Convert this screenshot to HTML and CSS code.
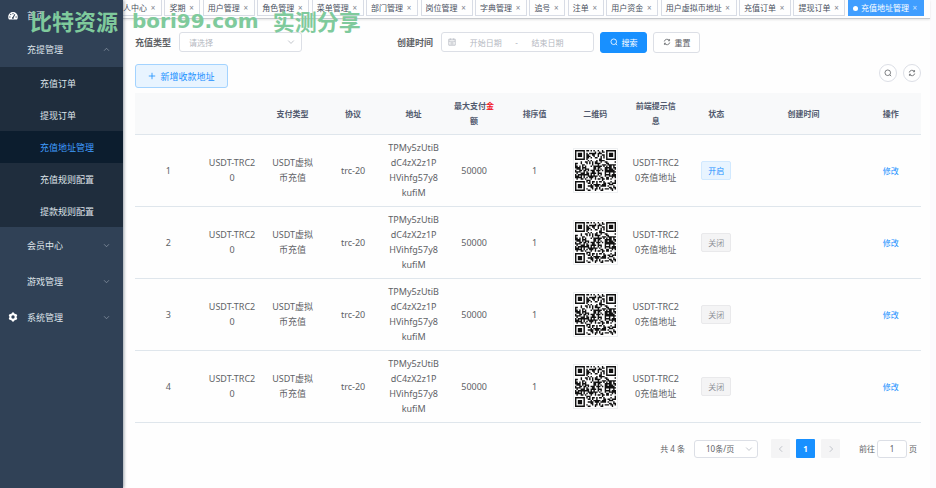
FILE: index.html
```html
<!DOCTYPE html>
<html lang="zh-CN">
<head>
  <meta charset="UTF-8">
  <meta name="viewport" content="width=device-width, initial-scale=1.0">
  <title>充值地址管理</title>
  <link rel="stylesheet" href="styles.css">
</head>
<body>
  <svg class="sprite" aria-hidden="true">
    <symbol id="i-down" viewBox="0 0 10 10"><path d="M1.5 3.2 5 6.8l3.5-3.6"/></symbol>
    <symbol id="i-up" viewBox="0 0 10 10"><path d="M1.5 6.8 5 3.2l3.5 3.6"/></symbol>
    <symbol id="i-left" viewBox="0 0 10 10"><path d="M6.5 1.5 3 5l3.5 3.5"/></symbol>
    <symbol id="i-right" viewBox="0 0 10 10"><path d="M3.5 1.5 7 5 3.5 8.5"/></symbol>
    <symbol id="i-search" viewBox="0 0 10 10"><circle cx="4.7" cy="4.7" r="3.5"/><path d="M7.2 7.2 9 9"/></symbol>
    <symbol id="i-refresh" viewBox="0 0 10 10"><path d="M1.6 4.4A3.5 3.5 0 0 1 8 3.2M8.4 5.6A3.5 3.5 0 0 1 2 6.8M8.2 1.4v2H6.2M1.8 8.6v-2h2"/></symbol>
    <symbol id="i-plus" viewBox="0 0 10 10"><path d="M5 1v8M1 5h8"/></symbol>
    <symbol id="i-date" viewBox="0 0 10 10"><path d="M1 1.5h8v7.5H1zM1 4h8M3 .6v1.6M7 .6v1.6M3 6h4M3 7.5h4"/></symbol>
  </svg>

  <div class="app">
    <aside class="sidebar">
      <a class="menu-item home" href="#">
        <svg class="menu-icon" viewBox="0 0 10 10"><path fill="currentColor" fill-rule="evenodd" d="M5 1a4.8 4.8 0 0 0-4.8 4.9c0 1 .3 1.9.8 2.6h8c.5-.7.8-1.6.8-2.6A4.8 4.8 0 0 0 5 1zM4.5 2h1v1.3h-1zM2 3.3l.7-.6.8 1-.7.6zM1.2 5.5h1.3v1H1.2zM7.500 5.5h1.3v1H7.5zM6.5 3l.8.5-1.6 3a.9.9 0 1 1-.9-.4z"/></svg>
        <span>首页</span>
      </a>
      <a class="menu-item" href="#"><span>充提管理</span><svg class="arrow"><use href="#i-up"/></svg></a>
      <nav class="submenu">
        <a href="#">充值订单</a>
        <a href="#">提现订单</a>
        <a href="#" class="active">充值地址管理</a>
        <a href="#">充值规则配置</a>
        <a href="#">提款规则配置</a>
      </nav>
      <a class="menu-item" href="#"><span>会员中心</span><svg class="arrow"><use href="#i-down"/></svg></a>
      <a class="menu-item" href="#"><span>游戏管理</span><svg class="arrow"><use href="#i-down"/></svg></a>
      <a class="menu-item" href="#">
        <svg class="menu-icon" viewBox="0 0 10 10"><circle class="gear-ring" cx="5" cy="5" r="2.7"/><path class="gear-teeth" d="M5 .6v1.6M5 7.8v1.6M1.2 2.8l1.4.8M7.4 6.4l1.4.8M1.2 7.2l1.4-.8M7.4 3.6l1.4-.8"/></svg>
        <span>系统管理</span><svg class="arrow"><use href="#i-down"/></svg>
      </a>
    </aside>

    <main class="main">
      <nav class="tabs">
        <a href="#">人中心<i>×</i></a>
        <a href="#">奖期<i>×</i></a>
        <a href="#">用户管理<i>×</i></a>
        <a href="#">角色管理<i>×</i></a>
        <a href="#">菜单管理<i>×</i></a>
        <a href="#">部门管理<i>×</i></a>
        <a href="#">岗位管理<i>×</i></a>
        <a href="#">字典管理<i>×</i></a>
        <a href="#">追号<i>×</i></a>
        <a href="#">注单<i>×</i></a>
        <a href="#">用户资金<i>×</i></a>
        <a href="#">用户虚拟币地址<i>×</i></a>
        <a href="#">充值订单<i>×</i></a>
        <a href="#">提现订单<i>×</i></a>
        <a href="#" class="active">充值地址管理<i>×</i></a>
      </nav>

      <div class="content">
        <form class="search-form">
          <label for="type">充值类型</label>
          <div class="select type-select">
            <select id="type"><option>请选择</option></select>
            <svg><use href="#i-down"/></svg>
          </div>
          <label class="date-label" for="start">创建时间</label>
          <div class="date-range">
            <svg><use href="#i-date"/></svg>
            <input id="start" type="text" placeholder="开始日期">
            <span>-</span>
            <input type="text" placeholder="结束日期" aria-label="结束日期">
          </div>
          <button type="button" class="btn primary"><svg><use href="#i-search"/></svg>搜索</button>
          <button type="button" class="btn reset"><svg><use href="#i-refresh"/></svg>重置</button>
        </form>

        <div class="toolbar">
          <button type="button" class="add-btn"><svg><use href="#i-plus"/></svg>新增收款地址</button>
          <div class="tools">
            <button type="button" aria-label="搜索"><svg><use href="#i-search"/></svg></button>
            <button type="button" aria-label="刷新"><svg><use href="#i-refresh"/></svg></button>
          </div>
        </div>

        <table>
          <colgroup>
            <col class="col-index">
            <col span="9" class="col-base">
            <col class="col-time">
            <col class="col-base">
          </colgroup>
          <thead>
            <tr>
              <th></th>
              <th></th>
              <th>支付类型</th>
              <th>协议</th>
              <th>地址</th>
              <th>最大支付<span class="mark">金</span>额</th>
              <th>排序值</th>
              <th>二维码</th>
              <th>前端提示信息</th>
              <th>状态</th>
              <th>创建时间</th>
              <th>操作</th>
            </tr>
          </thead>
          <tbody id="rows"></tbody>
        </table>

        <div class="pagination">
          <span class="total">共 4 条</span>
          <div class="select size-select">
            <select aria-label="每页条数"><option>10条/页</option></select>
            <svg><use href="#i-down"/></svg>
          </div>
          <div class="pager">
            <button type="button" disabled aria-label="上一页"><svg><use href="#i-left"/></svg></button>
            <button type="button" class="current">1</button>
            <button type="button" disabled aria-label="下一页"><svg><use href="#i-right"/></svg></button>
          </div>
          <label for="jump">前往</label>
          <input id="jump" type="text" value="1">
          <span>页</span>
        </div>
      </div>
    </main>
  </div>

  <div class="watermark"><span>比特资源</span><span class="site">bori99.com</span><span>实测分享</span></div>

  <script src="script.js"></script>
</body>
</html>
```

FILE: styles.css
```css
* {
  box-sizing: border-box;
}

body {
  margin: 0;
  font-family: "Noto Sans", "Noto Sans CJK SC", sans-serif;
  font-size: 8px;
  line-height: 15px;
  color: #606266;
  background: #fefefe;
}

a {
  color: inherit;
  text-decoration: none;
}

button, input, select {
  font: inherit;
  color: inherit;
  margin: 0;
  padding: 0;
  border: 1px solid #dcdfe6;
  border-radius: 3px;
  background: #fff;
}

svg {
  width: 8px;
  height: 8px;
  flex: none;
  fill: none;
  stroke: currentColor;
  stroke-width: 1;
}

.sprite {
  display: none;
}

.app {
  display: flex;
  min-height: 100vh;
}

/* sidebar */
.sidebar {
  flex: none;
  width: 123px;
  font-size: 9px;
  color: #dfe4ea;
  background: #304156;
  box-shadow: 1px 0 3px rgba(0, 21, 41, 0.4);
  z-index: 1;
}

.menu-item {
  position: relative;
  display: flex;
  align-items: center;
  height: 36px;
  padding: 0 13px 0 27px;
}

.menu-item.home {
  height: 31px;
}

.menu-icon {
  position: absolute;
  left: 8px;
  width: 10px;
  height: 10px;
  stroke: none;
  color: #fff;
}

.gear-ring {
  stroke: #fff;
  stroke-width: 2;
}

.gear-teeth {
  stroke: #fff;
  stroke-width: 2;
}

.arrow {
  margin-left: auto;
  width: 7px;
  height: 7px;
  color: #909cab;
}

.submenu {
  background: #1f2d3d;
}

.submenu a {
  display: block;
  height: 32px;
  line-height: 34px;
  padding-left: 40px;
}

.submenu .active {
  color: #409eff;
  background: #0c1d2e;
}

/* open pages */
.main {
  flex: 1;
  min-width: 0;
  border-right: 6px solid #fcfafd;
}

.tabs {
  display: flex;
  justify-content: space-between;
  height: 19px;
  padding-right: 6px;
  border-bottom: 1px solid #c8cace;
  box-shadow: 0 1px 2px rgba(0, 0, 0, 0.1);
}

.tabs a {
  flex: none;
  height: 16px;
  padding: 0 4px;
  border: 1px solid #d8dce5;
  border-top: 0;
  white-space: nowrap;
  color: #495060;
}

.tabs a:first-child {
  padding-left: 0;
  border-left: 0;
}

.tabs i {
  display: inline-block;
  width: 10px;
  padding-left: 2px;
  text-align: center;
  font-style: normal;
  opacity: 0.7;
}

.tabs .active {
  color: #fff;
  background: #409eff;
  border-color: #409eff;
}

.tabs .active::before {
  content: "";
  display: inline-block;
  width: 5px;
  height: 5px;
  margin-right: 3px;
  border-radius: 50%;
  background: #fff;
}

.content {
  padding: 13px 9px 0 12px;
}

/* filters */
.search-form {
  display: flex;
  align-items: center;
  height: 20px;
}

.search-form label {
  margin-right: 8px;
  font-size: 9px;
  font-weight: bold;
}

.search-form .date-label {
  margin-left: 95px;
}

.select {
  position: relative;
}

.select select {
  width: 100%;
  height: 100%;
  appearance: none;
}

.select svg {
  position: absolute;
  right: 7px;
  top: 6px;
  color: #b4b8bf;
  pointer-events: none;
}

.type-select {
  width: 123px;
  height: 20px;
}

.type-select select {
  padding-left: 9px;
  color: #b4b8bf;
}

.date-range {
  display: flex;
  align-items: center;
  width: 153px;
  height: 20px;
  padding: 0 16px 0 6px;
  border: 1px solid #dcdfe6;
  border-radius: 3px;
  color: #b4b8bf;
  background: #fff;
}

.date-range input {
  flex: 1;
  min-width: 0;
  border: 0;
  text-align: center;
}

::placeholder {
  color: #b4b8bf;
}

.btn {
  display: flex;
  align-items: center;
  justify-content: center;
  gap: 4px;
  width: 47px;
  height: 21px;
  margin-left: 6px;
}

.btn.primary {
  color: #fff;
  background: #1890ff;
  border-color: #1890ff;
}

.toolbar {
  display: flex;
  align-items: center;
  justify-content: space-between;
  margin: 12px 0 5px;
}

.add-btn {
  display: flex;
  align-items: center;
  justify-content: center;
  gap: 4px;
  width: 93px;
  height: 24px;
  font-size: 9px;
  color: #1890ff;
  background: #e8f4ff;
  border-color: #a3d3ff;
}

.tools {
  display: flex;
  gap: 6px;
  margin-bottom: 6px;
}

.tools button {
  display: flex;
  align-items: center;
  justify-content: center;
  width: 18px;
  height: 18px;
  border-radius: 50%;
}

/* table */
table {
  width: 100%;
  table-layout: fixed;
  border-collapse: separate;
  border-spacing: 0;
}

.col-index {
  width: 8.5%;
}

.col-base {
  width: 7.7%;
}

th, td {
  border-bottom: 1px solid #dfe6ec;
  text-align: center;
}

th {
  padding: 5px 8px 6px;
  color: #515a6e;
  background: #f8f9fa;
  word-break: break-all;
}

td {
  padding: 5px 0 6px;
  font-size: 9px;
}

.mark {
  color: #f0141e;
}

td a {
  font-size: 8px;
  color: #1890ff;
}

.qr {
  display: block;
  width: 45px;
  height: 45px;
  margin: 0 auto;
  padding: 1px;
  border: 1px solid #eef0f2;
  fill: #111;
  stroke: none;
}

.tag {
  display: inline-block;
  height: 19px;
  padding: 0 6px;
  font-size: 8px;
  line-height: 18px;
  vertical-align: middle;
  border: 1px solid #d1e9ff;
  border-radius: 2px;
  color: #1890ff;
  background: #e8f4ff;
}

.tag.off {
  color: #909399;
  background: #f4f4f5;
  border-color: #e9e9eb;
}

/* pagination */
.pagination {
  display: flex;
  align-items: center;
  justify-content: flex-end;
  margin-top: 16px;
  padding-right: 4px;
}

.total {
  margin-right: 9px;
}

.size-select {
  width: 64px;
  height: 18px;
}

.size-select select {
  padding-left: 11px;
}

.size-select svg {
  right: 5px;
  top: 5px;
}

.pager {
  display: flex;
  gap: 6px;
  margin: 0 19px 0 13px;
}

.pager button {
  display: flex;
  align-items: center;
  justify-content: center;
  width: 19px;
  height: 19px;
  border: 0;
  border-radius: 1px;
  color: #b4b8bf;
  background: #f4f4f5;
}

.pager .current {
  font-weight: bold;
  color: #fff;
  background: #1890ff;
}

.pagination input {
  width: 30px;
  height: 18px;
  margin: 0 2px;
  text-align: center;
}

.watermark {
  position: absolute;
  top: 6px;
  left: 30px;
  z-index: 2;
  display: flex;
  gap: 14px;
  font-size: 22px;
  line-height: 30px;
  font-weight: bold;
  white-space: nowrap;
  color: #7fca9c;
  pointer-events: none;
}

.watermark .site {
  font-family: "DejaVu Sans", sans-serif;
  font-size: 20px;
}
```

FILE: script.js
```javascript
const rows = [
  { id: 1, open: true },
  { id: 2, open: false },
  { id: 3, open: false },
  { id: 4, open: false }
];

const QR_SIZE = 29;

// finder squares in three corners, null for everything else
function finder(x, y) {
  const corners = [[0, 0], [QR_SIZE - 7, 0], [0, QR_SIZE - 7]];
  for (const [cx, cy] of corners) {
    const d = Math.max(Math.abs(x - cx - 3), Math.abs(y - cy - 3));
    if (d <= 4) return d === 3 || d <= 1;
  }
  return null;
}

function qrPath() {
  let seed = 20;
  let path = "";
  for (let y = 0; y < QR_SIZE; y++) {
    for (let x = 0; x < QR_SIZE; x++) {
      seed = (seed * 1103515245 + 12345) % 2147483648;
      const corner = finder(x, y);
      const dark = corner === null ? seed / 2147483648 < 0.52 : corner;
      if (dark) path += `M${x} ${y}h1v1h-1z`;
    }
  }
  return path;
}

const qr = `<svg class="qr" viewBox="0 0 ${QR_SIZE} ${QR_SIZE}"><path d="${qrPath()}"/></svg>`;

document.getElementById("rows").innerHTML = rows.map(row => `
  <tr>
    <td>${row.id}</td>
    <td>USDT-TRC2<br>0</td>
    <td>USDT虚拟<br>币充值</td>
    <td>trc-20</td>
    <td>TPMy5zUtiB<br>dC4zX2z1P<br>HVihfg57y8<br>kufiM</td>
    <td>50000</td>
    <td>1</td>
    <td>${qr}</td>
    <td>USDT-TRC2<br>0充值地址</td>
    <td><span class="tag ${row.open ? "" : "off"}">${row.open ? "开启" : "关闭"}</span></td>
    <td></td>
    <td><a href="#">修改</a></td>
  </tr>`).join("");
```
